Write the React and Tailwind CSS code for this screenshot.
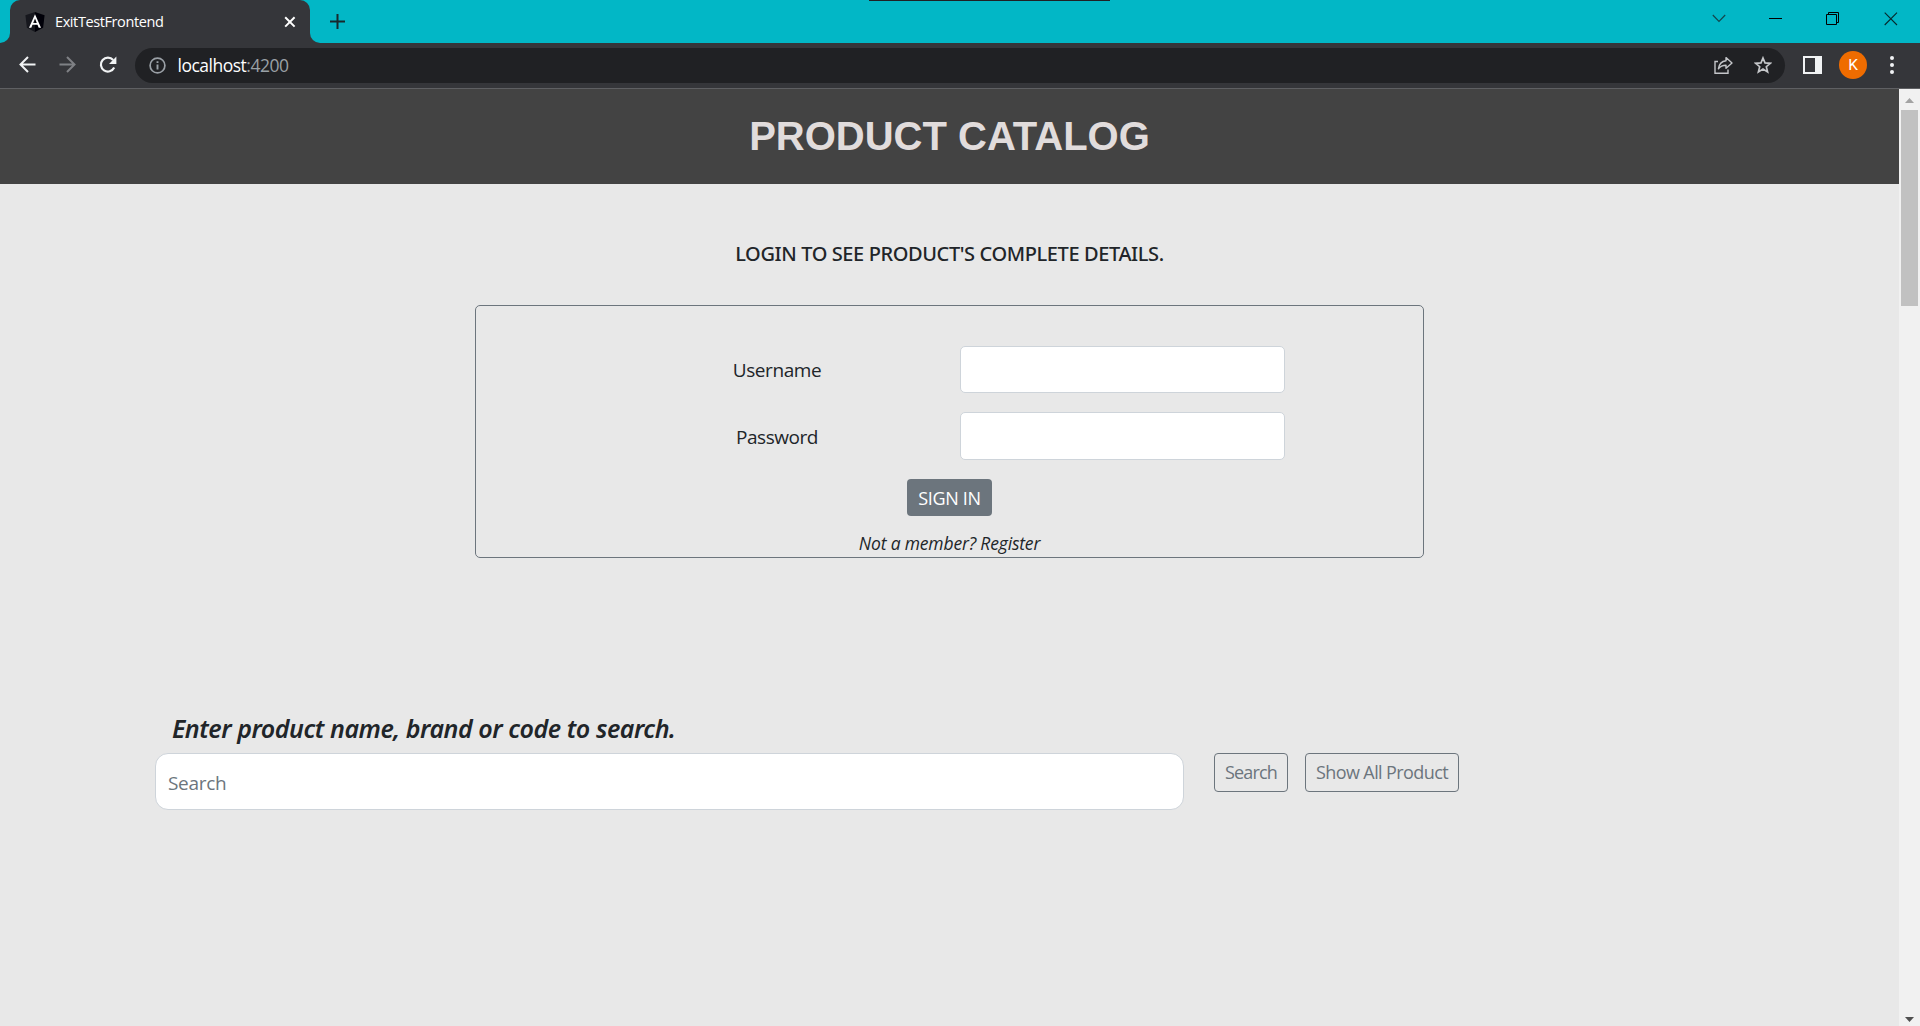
import React from "react";

function TabStrip() {
  return (
    <div className="relative flex h-[43px] bg-[#02b7c6]">
      <div className="absolute left-[869px] top-0 h-px w-[241px] bg-[#202124]" />
      <div className="flex w-[10px] items-end bg-[#35363a]">
        <div className="h-[43px] w-[10px] rounded-br-[10px] bg-[#02b7c6]" />
      </div>
      <div className="flex bg-[#02b7c6]">
        <div className="flex h-[43px] w-[300px] items-center rounded-t-[10px] bg-[#35363a] pl-[15px] pr-[14px]">
          <svg className="h-5 w-5 shrink-0" viewBox="0 0 20 20">
            <path d="M10 0L0.4 3.3L1.9 15.8L10 20Z" fill="#16171d" />
            <path d="M10 0L19.6 3.3L18.1 15.8L10 20Z" fill="#000008" />
            <path
              d="M10 2.2L4 15.7H6.3L7.5 12.7H12.5L13.7 15.7H16ZM10 6.6L11.8 10.9H8.2Z"
              fill="#fff"
              fillRule="evenodd"
            />
          </svg>
          <span className="ml-[10px] flex-1 whitespace-nowrap text-[14.5px] leading-5 tracking-[-0.4px] text-white">
            ExitTestFrontend
          </span>
          <svg className="h-3 w-3" viewBox="0 0 12 12">
            <path d="M1.2 1.2L10.6 10.6M10.6 1.2L1.2 10.6" stroke="#fff" strokeWidth="2" />
          </svg>
        </div>
      </div>
      <div className="w-[10px] bg-[#35363a]">
        <div className="h-full w-full rounded-bl-[10px] bg-[#02b7c6]" />
      </div>
      <svg className="ml-[10px] mt-[14px] h-[15px] w-[15px]" viewBox="0 0 15 15">
        <path d="M7.5 0V15M0 7.5H15" stroke="#17292c" strokeWidth="2" />
      </svg>
      <div className="ml-auto flex items-start pr-[22px] pt-3">
        <svg className="mt-[2px] h-[9px] w-[14px]" viewBox="0 0 14 9">
          <path d="M0.8 1L7 7.4L13.2 1" fill="none" stroke="#14454b" strokeWidth="1.2" />
        </svg>
        <svg className="ml-[43px] h-[13px] w-[13px]" viewBox="0 0 13 13">
          <path d="M0 6.5H13" stroke="#000" strokeWidth="1" />
        </svg>
        <svg className="ml-[44px] h-[13px] w-[13px]" viewBox="0 0 13 13">
          <path d="M0.5 2.5H10.5V12.5H0.5ZM2.5 2V0.5H12.5V10.5H11" fill="none" stroke="#000" />
        </svg>
        <svg className="ml-[45px] h-[14px] w-[14px]" viewBox="0 0 14 14">
          <path d="M0.7 0.7L13 13M13 0.7L0.7 13" stroke="#06292c" strokeWidth="1.1" />
        </svg>
      </div>
    </div>
  );
}

function Toolbar() {
  return (
    <div className="flex h-[46px] items-center border-b border-[#5f6063] bg-[#35363a] pb-px">
      <svg className="ml-[19px] mt-[-1px] h-[17px] w-[17px]" viewBox="0 0 17 17">
        <path d="M16.5 8.5H1.8M9 1L1.5 8.5L9 16" fill="none" stroke="#f1f3f4" strokeWidth="2" />
      </svg>
      <svg className="ml-[23px] mt-[-1px] h-[17px] w-[17px]" viewBox="0 0 17 17">
        <path d="M0.5 8.5H15.2M8 1L15.5 8.5L8 16" fill="none" stroke="#7f8185" strokeWidth="2" />
      </svg>
      <svg className="ml-[23px] mt-[-1px] h-[18px] w-[18px]" viewBox="0 0 18 18">
        <path d="M15.2 11.6A7 7 0 1 1 14.2 4" fill="none" stroke="#f1f3f4" strokeWidth="2.2" />
        <path d="M17.4 0.6V8H10Z" fill="#f1f3f4" />
      </svg>
      <div className="ml-[18px] flex h-[35px] w-[1650px] items-center rounded-full bg-[#202124] pl-[14px] pr-[13px]">
        <svg className="h-[17px] w-[17px]" viewBox="0 0 17 17">
          <circle cx="8.5" cy="8.5" r="7.4" fill="none" stroke="#9aa0a6" strokeWidth="1.7" />
          <path d="M8.5 7.4V12.6M8.5 4.2V6.1" stroke="#9aa0a6" strokeWidth="1.9" />
        </svg>
        <div className="ml-[11.5px] flex-1 text-[17.5px] leading-6 tracking-[-0.5px] text-white">
          localhost<span className="text-[#9aa0a6]">:4200</span>
        </div>
        <svg className="mt-px h-[19px] w-[19px]" viewBox="0 0 19 19">
          <path d="M4 5.5H1V17.2H14V13.5" fill="none" stroke="#c4c6c9" strokeWidth="1.4" />
          <path
            d="M12 1.6L18 7L12 12.3V9.2C8.5 9.2 6.3 10.3 4.4 12.8C5 8.6 7.5 5.2 12 4.7Z"
            fill="none"
            stroke="#c4c6c9"
            strokeWidth="1.4"
            strokeLinejoin="round"
          />
        </svg>
        <svg className="ml-[21px] h-[18px] w-[18px]" viewBox="0 0 18 18">
          <path
            d="M9 2L11 6.9L16.3 7.3L12.3 10.7L13.6 15.9L9 13.1L4.4 15.9L5.7 10.7L1.7 7.3L7 6.9Z"
            fill="none"
            stroke="#c4c6c9"
            strokeWidth="1.7"
          />
        </svg>
      </div>
      <div className="ml-[18px] h-[18px] w-[19px] border-[2px] border-r-[7px] border-[#f1f3f4]" />
      <div className="ml-[17px] flex h-7 w-7 items-center justify-center rounded-full bg-[#ef6c00] pt-[2px] font-[Roboto] text-[15.5px] text-white">
        K
      </div>
      <div className="ml-[23px] flex flex-col gap-[3px]">
        <i className="h-[4px] w-[4px] rounded-full bg-[#f1f3f4]" />
        <i className="h-[4px] w-[4px] rounded-full bg-[#f1f3f4]" />
        <i className="h-[4px] w-[4px] rounded-full bg-[#f1f3f4]" />
      </div>
    </div>
  );
}

function Scrollbar() {
  return (
    <div className="flex w-[21px] flex-col items-center bg-[#f1f1f1]">
      <svg className="mt-[9px] h-[5px] w-[9px]" viewBox="0 0 9 5">
        <path d="M4.5 0L9 5H0Z" fill="#a3a3a3" />
      </svg>
      <div className="mt-[7px] h-[196px] w-[17px] bg-[#c1c1c1]" />
      <svg className="mb-[4px] mt-auto h-[5px] w-[9px]" viewBox="0 0 9 5">
        <path d="M4.5 5L9 0H0Z" fill="#505050" />
      </svg>
    </div>
  );
}

export default function App() {
  return (
    <div className="flex h-[1026px] w-[1920px] flex-col overflow-hidden bg-[#e8e8e8] font-['Open_Sans','Noto_Sans',sans-serif] text-[#212529]">
      <TabStrip />
      <Toolbar />
      <div className="flex flex-1">
        <main className="w-[1899px]">
          <header className="flex h-[95px] items-center justify-center bg-[#434343] pb-[1px]">
            <h1 className="font-['Liberation_Sans',Arial,sans-serif] text-[40px] font-bold leading-[48px] text-[#e1dcdc]">
              PRODUCT CATALOG
            </h1>
          </header>

          <h5 className="mt-[58px] text-center font-['Noto_Sans',sans-serif] text-[20px] font-medium leading-6 tracking-[-0.39px]">
            LOGIN TO SEE PRODUCT'S COMPLETE DETAILS.
          </h5>

          <form className="mx-auto mt-[39px] flex h-[253px] w-[949px] flex-col items-center rounded-[5px] border border-[#6c757d] pt-[40px]">
            <div className="flex w-full items-center">
              <label className="ml-[187px] w-[228px] pt-px text-center text-[19px] leading-[30px] tracking-[-0.4px]">
                Username
              </label>
              <input className="ml-[69px] h-[47px] w-[325px] rounded-[5px] border border-[#ced4da] bg-white" />
            </div>
            <div className="mt-[19px] flex w-full items-center">
              <label className="ml-[187px] w-[228px] pt-[2px] text-center text-[19px] leading-[30px] tracking-[-0.45px]">
                Password
              </label>
              <input className="ml-[69px] h-[48px] w-[325px] rounded-[5px] border border-[#ced4da] bg-white" />
            </div>
            <button
              type="button"
              className="mt-[19px] h-[38px] w-[85px] rounded-[4px] bg-[#6c757d] text-[18px] leading-7 tracking-[-0.3px] text-white"
            >
              SIGN IN
            </button>
            <p className="mt-[13px] text-[17.5px] italic leading-7 tracking-[-0.17px]">Not a member? Register</p>
          </form>

          <section className="ml-[155px] mt-[155px]">
            <h4 className="ml-[17px] font-['Noto_Sans',sans-serif] text-[25px] font-semibold italic leading-[30px] tracking-[-0.45px]">
              Enter product name, brand or code to search.
            </h4>
            <div className="mt-[10px] flex items-start">
              <input
                placeholder="Search"
                className="h-[57px] w-[1029px] rounded-[13px] border border-[#ced4da] bg-white px-[12px] pt-[3px] text-[19px] tracking-[-0.3px] placeholder:text-[#6c757d]"
              />
              <button
                type="button"
                className="ml-[30px] h-[39px] w-[74px] rounded-[4px] border border-[#6c757d] pb-px text-[18px] leading-7 tracking-[-0.8px] text-[#6c757d]"
              >
                Search
              </button>
              <button
                type="button"
                className="ml-[17px] h-[39px] w-[154px] rounded-[4px] border border-[#6c757d] pb-px text-[18px] leading-7 tracking-[-0.6px] text-[#6c757d]"
              >
                Show All Product
              </button>
            </div>
          </section>
        </main>
        <Scrollbar />
      </div>
    </div>
  );
}
